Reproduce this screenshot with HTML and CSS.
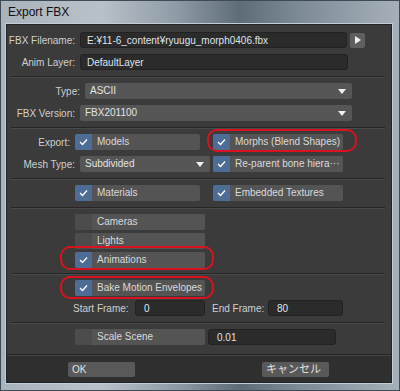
FILE: index.html
```html
<!DOCTYPE html>
<html lang="en">

<head>
    <meta charset="UTF-8">
    <title>Export FBX</title>
    <link rel="stylesheet" href="styles.css">
</head>

<body>
    <!-- Dialog window -->
    <div class="window">
        <div class="titlebar">Export FBX</div>
        <div class="panel">
            <div class="row">
                <span class="label">FBX Filename:</span>
                <div class="field file">E:¥11-6_content¥ryuugu_morph0406.fbx</div>
                <div class="browse">
                    <svg width="6" height="8" viewBox="0 0 6 8"><polygon points="0,0 6,4 0,8" fill="#f2f2f2"/></svg>
                </div>
            </div>
            <div class="row">
                <span class="label">Anim Layer:</span>
                <div class="field layer">DefaultLayer</div>
            </div>
            <div class="sep"></div>

            <div class="row">
                <span class="label wide">Type:</span>
                <div class="select type">ASCII<span class="arrow"></span></div>
            </div>
            <div class="row">
                <span class="label">FBX Version:</span>
                <div class="select version">FBX201100<span class="arrow"></span></div>
            </div>
            <div class="sep"></div>

            <div class="row">
                <span class="label narrow">Export:</span>
                <div class="check on">Models</div>
                <div class="check on right">Morphs (Blend Shapes)</div>
            </div>
            <div class="row">
                <span class="label">Mesh Type:</span>
                <div class="select mesh">Subdivided<span class="arrow"></span></div>
                <div class="check on right tight">Re-parent bone hiera···</div>
            </div>
            <div class="sep"></div>

            <div class="row">
                <span class="label narrow"></span>
                <div class="check on">Materials</div>
                <div class="check on right">Embedded Textures</div>
            </div>
            <div class="sep"></div>

            <div class="stack">
                <div class="check long">Cameras</div>
                <div class="check long">Lights</div>
                <div class="check long on">Animations</div>
            </div>
            <div class="sep"></div>

            <div class="stack">
                <div class="check long on">Bake Motion Envelopes</div>
            </div>
            <div class="row frames">
                <span class="flabel">Start Frame:</span>
                <div class="field num start">0</div>
                <span class="flabel end">End Frame:</span>
                <div class="field num endf">80</div>
            </div>
            <div class="sep"></div>

            <div class="row">
                <span class="label narrow"></span>
                <div class="check long">Scale Scene</div>
                <div class="field num scale">0.01</div>
            </div>

            <div class="footer">
                <div class="btn ok">OK</div>
                <div class="btn cancel">キャンセル</div>
            </div>

            <!-- Red highlight marks -->
            <div class="mark mark-morphs"></div>
            <div class="mark mark-anim"></div>
            <div class="mark mark-bake"></div>
        </div>
    </div>
</body>

</html>
```

FILE: styles.css
```css
/* Page */
body {
    margin: 0;
    font-family: "Liberation Sans", "Noto Sans CJK JP", sans-serif;
    font-size: 10px;
}

/* Window frame */
.window {
    width: 400px;
    height: 391px;
    box-sizing: border-box;
    padding: 0 7px 7px 5px;
    background: linear-gradient(90deg, #a9b3bc 0%, #b9c1c8 25%, #8c99a5 45%, #5e6c78 60%, #7d8b97 75%, #a6b0ba 100%);
    border: 1px solid #3e4a54;
    display: flex;
    flex-direction: column;
}

.titlebar {
    height: 23px;
    line-height: 22px;
    padding-left: 2px;
    font-size: 12px;
    color: #101010;
}

/* Main dark panel */
.panel {
    position: relative;
    flex: 1;
    background: #3b3b3b;
    border: 1px solid #1e252b;
    box-shadow: 0 0 0 1px #c4ccd4;
    padding-top: 7px;
    display: flex;
    flex-direction: column;
}

.row {
    display: flex;
    align-items: center;
    height: 16px;
    margin-bottom: 6px;
}

.label {
    width: 68px;
    text-align: right;
    color: #cfcfcf;
    margin-right: 5px;
    flex-shrink: 0;
}

.label.wide {
    width: 73px;
}

.label.narrow {
    width: 63px;
}

.sep {
    height: 1px;
    margin: 0 6px 5px 4px;
    background: #262626;
    border-bottom: 1px solid #4a4a4a;
}

/* Text fields */
.field {
    height: 16px;
    line-height: 16px;
    box-sizing: border-box;
    background: #2b2b2b;
    border: 1px solid #222;
    border-radius: 3px;
    color: #dfe3ea;
    padding-left: 6px;
}

.field.file {
    width: 267px;
}

.field.layer {
    width: 268px;
}

.browse {
    width: 15px;
    height: 15px;
    margin-left: 3px;
    background: #5f5f5f;
    border-radius: 2px;
    display: flex;
    align-items: center;
    justify-content: center;
}

/* Dropdowns */
.select {
    position: relative;
    height: 16px;
    line-height: 16px;
    box-sizing: border-box;
    background: #565656;
    border-radius: 2px;
    color: #e2e2e2;
    padding-left: 5px;
}

.select.type {
    width: 267px;
}

.select.version {
    width: 272px;
}

.select.mesh {
    width: 130px;
}

.arrow {
    position: absolute;
    right: 6px;
    top: 6px;
    border-left: 4px solid transparent;
    border-right: 4px solid transparent;
    border-top: 5px solid #f0f0f0;
}

/* Checkbox buttons */
.check {
    position: relative;
    width: 125px;
    height: 16px;
    line-height: 16px;
    box-sizing: border-box;
    background: #545454;
    border-radius: 2px;
    color: #dadada;
    padding-left: 22px;
    flex-shrink: 0;
}

.check::before {
    content: "";
    position: absolute;
    left: 0;
    top: 0;
    width: 17px;
    height: 16px;
    border-radius: 2px 0 0 2px;
    background: #4c4c4c;
}

.check.on::before {
    background: #4d6d96 url("data:image/svg+xml,%3Csvg xmlns='http://www.w3.org/2000/svg' width='17' height='16'%3E%3Cpolyline points='5,8 7.5,10.5 12,5.5' fill='none' stroke='white' stroke-width='1.3'/%3E%3C/svg%3E") no-repeat;
}

.check.right {
    margin-left: 13px;
    width: 130px;
}

.check.right.tight {
    margin-left: 3px;
}

.check.long {
    width: 130px;
}

.stack {
    display: flex;
    flex-direction: column;
    gap: 3px;
    padding-left: 68px;
    margin-bottom: 5px;
}

/* Frame range row */
.frames {
    margin-top: -1px;
}

.flabel {
    color: #cfcfcf;
    margin-left: 66px;
    width: 62px;
}

.flabel.end {
    margin-left: 7px;
    width: 56px;
}

.field.num {
    padding-left: 8px;
}

.field.start {
    width: 70px;
}

.field.endf {
    width: 75px;
}

.field.scale {
    width: 128px;
    margin-left: 3px;
}

/* Footer buttons */
.footer {
    margin-top: auto;
    height: 28px;
    background: #2f2f2f;
    border-top: 1px solid #262626;
    box-shadow: inset 0 1px 0 #444;
    display: flex;
    align-items: center;
    padding-top: 2px;
    box-sizing: border-box;
}

.btn {
    height: 15px;
    line-height: 15px;
    width: 67px;
    box-sizing: border-box;
    background: #595959;
    border-radius: 2px;
    color: #e0e0e0;
    padding-left: 4px;
}

.btn.ok {
    margin-left: 61px;
}

.btn.cancel {
    margin-left: 127px;
    font-size: 11px;
}

/* Red highlight outlines */
.mark {
    position: absolute;
    border: 2.5px solid #d8121e;
    border-radius: 10px;
}

.mark-morphs {
    left: 200px;
    top: 104px;
    width: 146px;
    height: 19px;
}

.mark-anim {
    left: 53px;
    top: 221px;
    width: 150px;
    height: 20px;
}

.mark-bake {
    left: 53px;
    top: 251px;
    width: 150px;
    height: 19px;
}
```
